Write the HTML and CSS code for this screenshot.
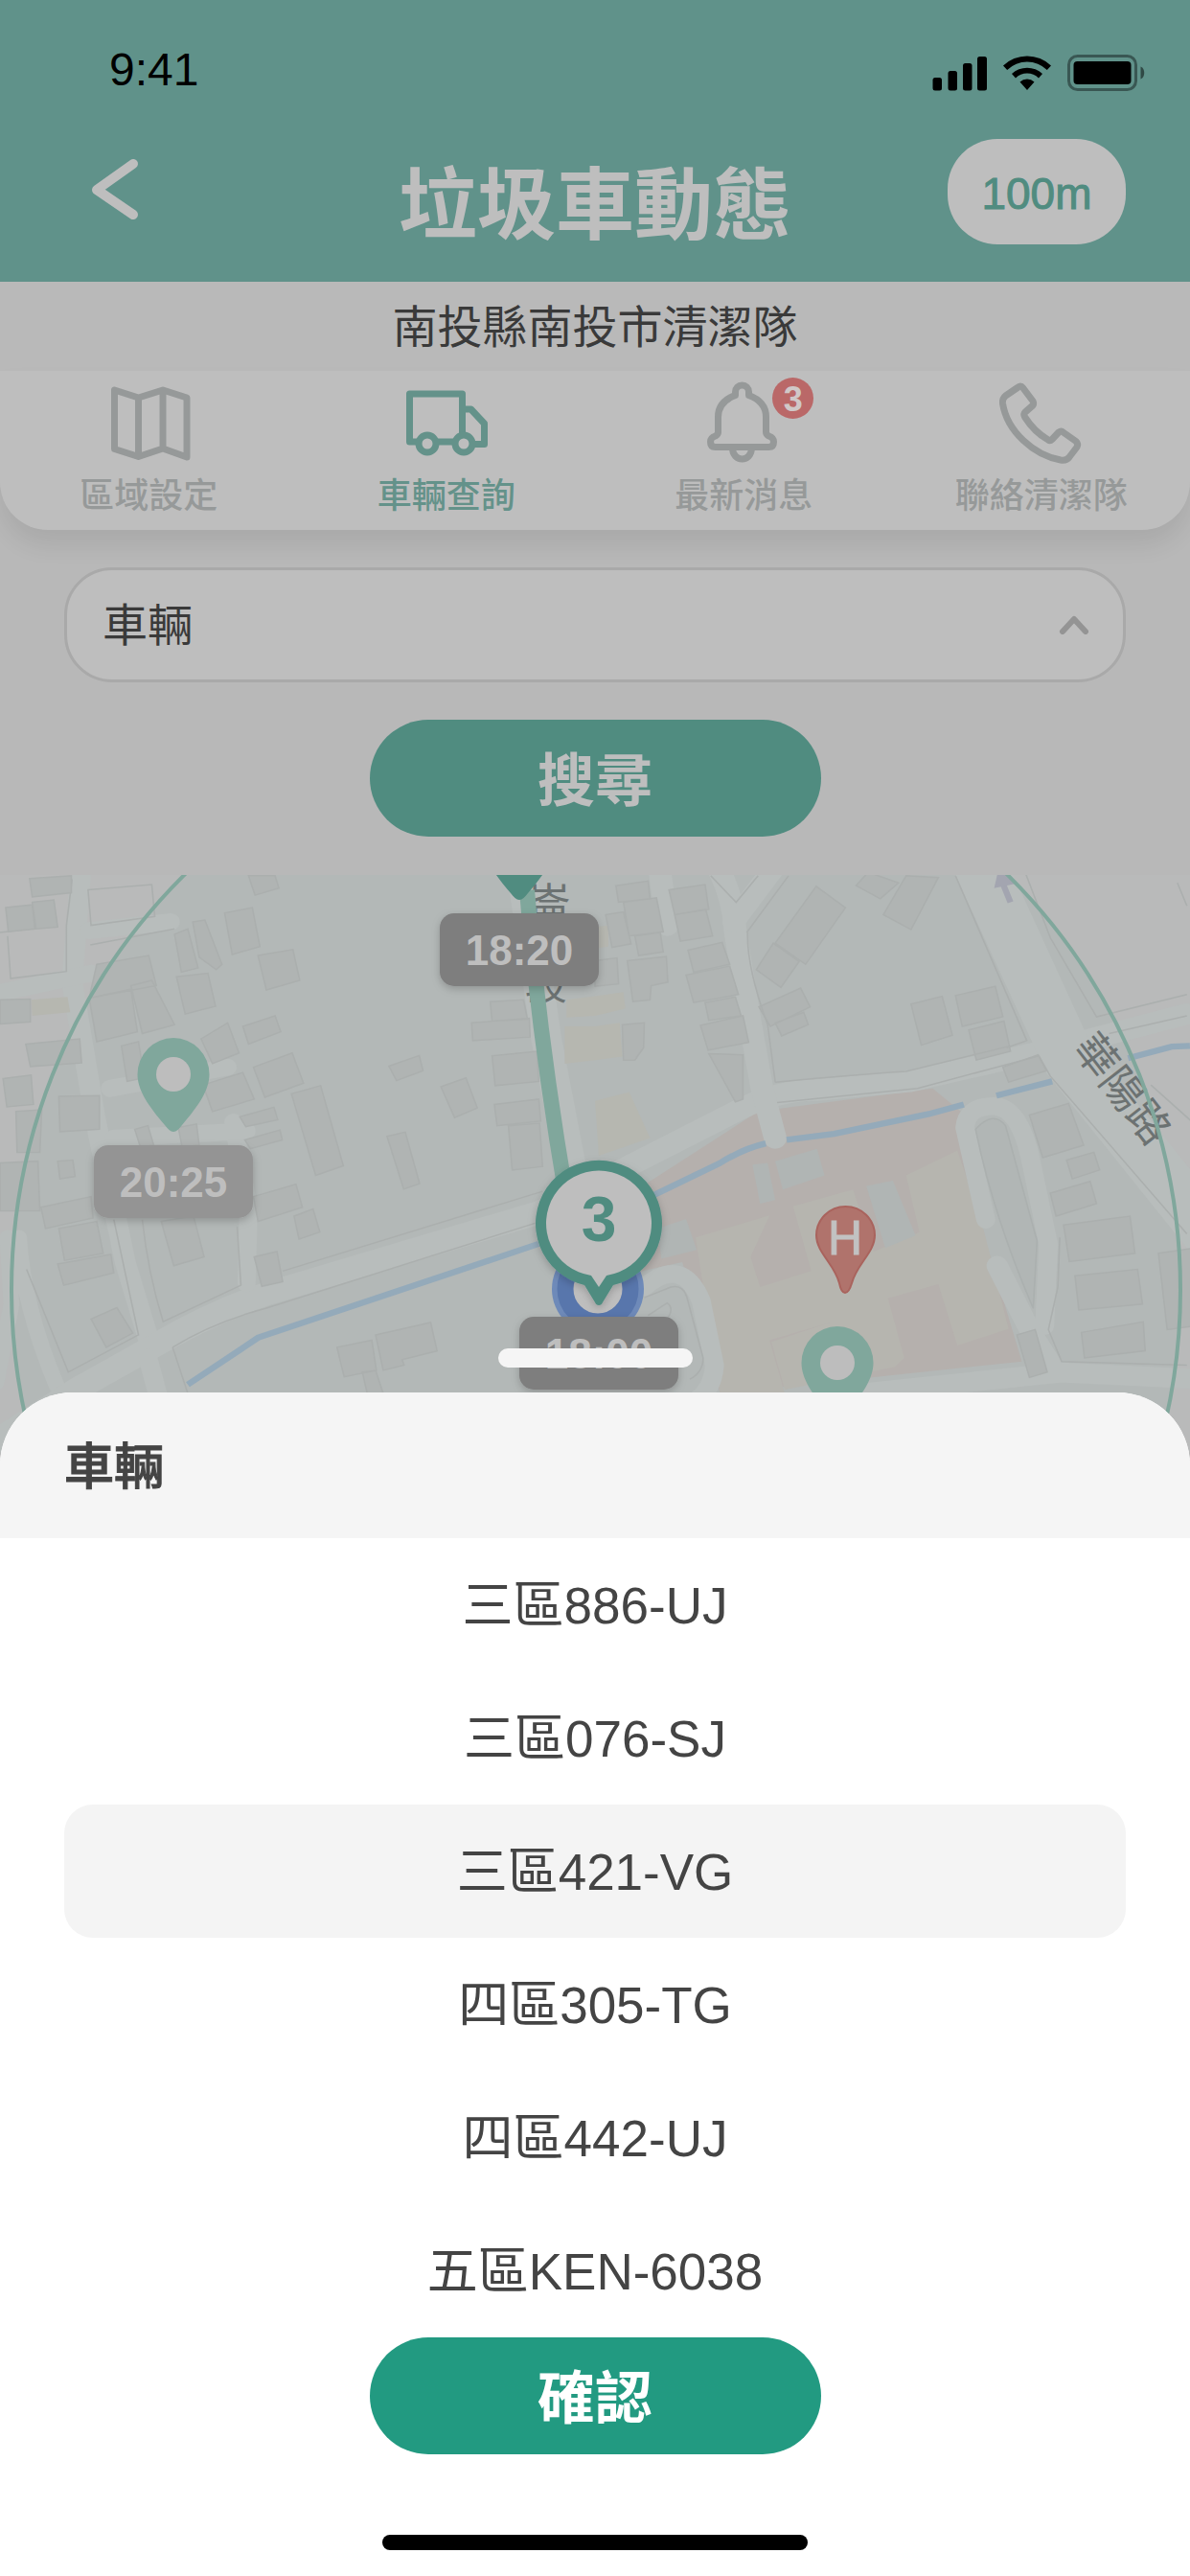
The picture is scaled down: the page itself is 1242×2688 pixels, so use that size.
FILE: index.html
```html
<!DOCTYPE html>
<html lang="zh-Hant">
<head>
<meta charset="utf-8">
<meta name="viewport" content="width=device-width, initial-scale=1">
<title>垃圾車動態</title>
<link rel="stylesheet" href="styles.css">
</head>
<body>
<div class="screen">
  <header class="header">
    <div class="status">
      <span class="status-time">9:41</span>
      <svg class="status-icons" width="222" height="40" viewBox="973 56 222 40" aria-hidden="true">
        <rect x="973.5" y="81" width="9.5" height="13.500" rx="2.500"/>
        <rect x="989.5" y="74" width="9.5" height="20.500" rx="2.500"/>
        <rect x="1005" y="66" width="9.5" height="28.500" rx="2.500"/>
        <rect x="1020" y="59" width="10" height="35.500" rx="2.500"/>
        <path d="M1072 94l-7.500-8.500a11 11 0 0 1 15 0zM1056 77l4 4.500a17 17 0 0 1 24 0l4-4.500a23.500 23.500 0 0 0-32 0zM1047 68.500l4.200 4.500a30 30 0 0 1 41.600 0l4.200-4.500a36 36 0 0 0-50 0z"/>
        <rect x="1115.500" y="58.500" width="70" height="35" rx="9" fill="none" stroke="#000" stroke-opacity=".4" stroke-width="3"/>
        <rect x="1120.500" y="64" width="60" height="24" rx="4"/>
        <path d="M1190.500 69.500c5 2 5 11 0 13z" fill-opacity=".5"/>
      </svg>
    </div>
    <div class="titlebar">
      <button class="back" type="button" aria-label="返回">
        <svg width="48" height="60" viewBox="0 0 48 60" aria-hidden="true"><path d="M44 4L6 31l38 26"/></svg>
      </button>
      <h1 class="title">垃圾車動態</h1>
      <button class="distance" type="button">100m</button>
    </div>
  </header>

  <main class="main">
    <p class="team">南投縣南投市清潔隊</p>

    <nav class="tabs">
      <a class="tab" href="#area">
        <svg class="tab-icon" viewBox="0 0 84 84" aria-hidden="true"><path d="M6.500 7L31.500 15 57 7l25 8v62L57 68l-25.500 8.500-25-8zM31.500 15v61M57 7v61"/></svg>
        <span>區域設定</span>
      </a>
      <a class="tab tab-active" href="#vehicles">
        <svg class="tab-icon" viewBox="0 0 84 84" aria-hidden="true"><path d="M12 61H3.500V11h55v43M31 61h20M60 27h7.500L81.500 42v21.500H70"/><circle cx="22" cy="63" r="9"/><circle cx="60" cy="63" r="9"/></svg>
        <span>車輛查詢</span>
      </a>
      <a class="tab" href="#news">
        <span class="tab-figure">
          <svg class="tab-icon" viewBox="0 0 84 84" aria-hidden="true"><path d="M33.500 12.500V9a7 7 0 0 1 14 0v3.500C57 16 65.500 23 65.500 35v16c0 2 1 3 3 4 3 1 5 3 5 6 0 4-2 5.500-5 5.500h-56c-3 0-5-1.500-5-5.500 0-3 2-5 5-6 2-1 3-2 3-4V35c0-12 8.500-19 18-22.500zM30.500 67c0 16 20 16 20 0"/></svg>
          <span class="badge">3</span>
        </span>
        <span>最新消息</span>
      </a>
      <a class="tab" href="#contact">
        <svg class="tab-icon" viewBox="0 0 84 84" aria-hidden="true"><path d="M17 4.500c2-2 4-2 5.500 0L33 18.500c1 2 1 3 0 4.500l-8 7c-1.500 1.500-1.500 3-.5 5 7 11 14 18 24.500 24 1.500 1 3 .5 4-.5l7-7.500c2-1.500 3-1.500 4.500 0L78 60.500c2 2 2 4 1 6L71 77c-2 3-5 3.500-9 3C34 75 6 50 1.500 21c-.5-4 .5-6 3-8z"/></svg>
        <span>聯絡清潔隊</span>
      </a>
    </nav>

    <form class="search" action="#" method="get">
      <div class="select-wrap">
        <select class="select" aria-label="車輛" name="vehicle"><option>車輛</option></select>
        <svg class="select-arrow" width="32" height="20" viewBox="0 0 32 20" aria-hidden="true"><path d="M4 17L16 4l12 13"/></svg>
      </div>
      <button class="button button-dim" type="submit">搜尋</button>
    </form>

    <section class="map" aria-label="地圖">
      <svg class="map-art" viewBox="0 914 1242 640" role="img" aria-label="南投市街道圖">
        <defs>
          <filter id="lift" x="-20%" y="-20%" width="140%" height="150%"><feDropShadow dx="0" dy="3" stdDeviation="4" flood-opacity=".2"/></filter>
          <g id="pin"><path d="M0 60C-3 60-6 57-9 53-27 32-37.500 16-37.500 0a37.500 38 0 0 1 75 0C37.500 16 27 32 9 53 6 57 3 60 0 60z"/><circle r="18" fill="#bdbdbd"/></g>
        </defs>
        <rect x="0" y="914" width="1242" height="640" fill="#b9baba"/>
        <circle cx="622" cy="1347" r="610" fill="#b3b8b7"/>

        <g transform="translate(0 900) scale(.396 .37)">
          <g class="road">
            <path d="M215 0L190 340Q225 560 250 720L330 1130 395 1360" stroke-width="55"/>
            <path d="M0 370L240 315M235 195L450 170" stroke-width="48"/>
            <path d="M-10 1470L30 1250 20 1060M50 1060Q60 1250 150 1480" stroke-width="42"/>
            <path d="M-20 1640L200 1490 400 1370Q560 1270 700 1220L1420 990 1600 900" stroke-width="66"/>
            <path d="M290 640L600 580M300 780L650 760M615 735L655 980 650 1190" stroke-width="48"/>
            <path d="M390 1400L440 1600" stroke-width="50"/>
            <path d="M1380 60L1440 500 1530 1000" stroke-width="80"/>
          </g>
          <g class="block">
            <path d="M0 200L80 190M20 210L28 330 175 310 175 180 190 50 M238 235L460 190M232 80L400 65 408 155 240 180z" fill="none"/>
            <path d="M78 48L188 40 188 88 85 100zM15 130L85 122 92 190 22 198zM85 115L142 108 152 185 95 190zM0 390L80 388 80 452 0 458zM68 515L210 500 215 568 80 578zM8 612L82 602 88 685 18 692zM42 705L110 700 105 820 45 820zM155 662L262 660 262 755 158 762zM152 845L192 842 198 888 158 895zM0 850L100 845 105 985 0 985z"/>
            <path d="M255 290L392 265 412 350 235 385zM235 385L345 360 362 480 255 508zM345 350L400 335 460 460 375 485zM460 205L495 190 522 300 478 312zM508 170L540 165 585 290 570 305 525 270zM592 145L665 130 685 240 612 262zM655 40L725 40 735 75 672 95zM680 265L772 248 790 335 702 362zM465 325L548 315 568 408 488 430zM640 465L725 435 740 480 655 515z"/>
            <path d="M668 580L770 540 800 625 698 665zM768 655L845 632 905 858 832 885zM530 500L600 455 630 540 560 570zM320 520L365 508 380 610 335 620zM535 630L640 595 670 670 560 705zM632 720L722 693 732 728 648 748zM645 785L738 757 744 785 660 810zM355 755L390 745 405 800 370 805zM470 750L518 740 525 800 480 805z"/>
            <path d="M1025 577L1105 547 1115 590 1045 618zM1162 635L1228 610 1258 695 1198 722zM1020 775L1068 763 1106 908 1064 924zM1243 455L1395 442 1397 495 1246 505zM1297 548L1415 535 1420 620 1305 632zM1303 685L1420 670 1425 732 1310 745zM1340 745L1422 738 1430 860 1350 870zM1292 395L1380 390 1390 445 1297 450z"/>
            <path d="M108 975L240 945 245 1005 120 1035zM155 1035L255 1015 272 1105 170 1125zM425 1015L510 1000 538 1115 458 1140zM668 945L780 910 797 975 680 1015zM775 1000L825 980 843 1045 788 1065zM670 1115L730 1100 745 1185 690 1198zM152 1135L292 1108 300 1160 168 1195zM240 1290L308 1258 350 1330 280 1370zM888 1370L980 1350 992 1435 907 1453zM990 1335L1135 1300 1152 1380 1060 1405 1065 1420 1010 1435zM955 1440L990 1435 1010 1500 970 1510z"/>
            <path d="M375 1010Q390 1160 430 1298L635 1195 625 1030M455 1370Q560 1300 700 1260L1410 1020M745 1155L1430 930M300 1010L365 1335 180 1440 70 1150M495 1500L455 1370" fill="none"/>
          </g>
          <path class="field" d="M82 390L178 382 185 425 85 435z"/>
          <path class="river" d="M495 1475L680 1343 1420 1078"/>
        </g>

        <g transform="translate(621 900) scale(.396 .37)">
          <path class="clinic" d="M60 960L430 705 890 640 970 710 1010 1000 1125 1410 730 1455 330 1500 230 1130 60 1170z"/>
          <path class="ward" d="M265 1060L460 998 410 1115 435 1200 570 1155 522 972 680 925 735 1100 855 1045 820 885 955 815 1020 1020 1090 1318 955 1365 905 1192 772 1232 815 1400 790 1425 500 1490 465 1355 620 1300 460 1350 500 1500 330 1500z"/>
          <path class="field" d="M0 465L65 455 72 550 0 560zM0 380L75 368 80 415 0 435zM-80 465L0 465 0 560-80 570zM-75 390L0 380 0 435-75 440zM0 675L90 650 145 780 10 830zM0 185L35 180 35 240 0 245z"/>
          <path class="plain" d="M475 845L585 810 605 885 495 925zM415 855L455 850 475 955 435 965zM715 915L785 900 845 1055 765 1090zM165 1035L240 1008 268 1095 175 1120z"/>
          <g class="road">
            <path d="M-60 940L380 700Q480 645 580 645L830 620 1200 530 1560 430" stroke-width="60"/>
            <path d="M170 20L190 180M325 20Q365 100 370 200L410 460 440 640 475 780" stroke-width="60"/>
            <path d="M365 170L470 20" stroke-width="58"/>
            <path d="M1010 0L1250 560 1640 1080" stroke-width="140"/>
            <path d="M1030 1010L975 750Q980 690 1050 690 1120 690 1150 850L1195 1080 1185 1310" stroke-width="50"/>
            <path d="M1060 1140L1150 1330 1215 1440 1600 1460M700 1500L1240 1440" stroke-width="56"/>
            <path d="M130 1200Q230 1110 280 1240L315 1420Q310 1500 250 1530" stroke-width="50"/>
          </g>
          <path class="park" d="M1003 755Q1050 700 1082 745L1165 1070 1155 1260Q1050 1000 1003 755z"/>
          <g class="block">
            <path d="M55 68L140 55 145 105 62 115zM75 115L162 102 180 198 90 210zM195 80L290 65 300 135 210 150zM210 150L292 135 310 210 225 225zM28 150L75 142 95 232 45 242zM105 210L172 200 180 255 115 265zM85 280L188 268 192 340 148 350 145 390 100 395zM0 280L58 272 62 345 0 352zM72 460L130 455 128 525 105 560 75 560z"/>
            <path d="M245 250L335 228 355 290 260 312zM240 320L355 295 378 375 260 398zM290 398L370 382 385 435 300 448zM278 462L390 435 405 510 298 532zM300 542L390 545 390 670 370 678zM583 70L660 130 555 290 475 230zM470 230L538 282 490 355 425 305zM432 410L542 357 567 410 462 465zM475 455L550 425 562 460 492 492z"/>
            <path d="M720 30L800 60 752 105 688 68zM820 40L905 45 833 192 760 150zM833 402L915 380 942 490 860 518zM950 378L1055 352 1075 438 968 465zM985 475L1078 450 1095 535 1005 560zM1075 580L1168 545 1190 590 1090 622zM1145 715L1248 682 1288 800 1180 835zM1243 842L1315 820 1330 870 1258 895zM1200 935L1305 902 1322 965 1215 1000zM1235 1025L1410 1000 1423 1105 1250 1128zM1265 1168L1430 1150 1443 1248 1275 1265zM1282 1328L1445 1298 1450 1380 1290 1400zM1112 1335L1160 1320 1192 1440 1145 1455zM1485 1105L1580 1090 1580 1310 1508 1320z"/>
            <path d="M950 40L1138 505 1085 525M475 622Q700 600 820 592L1095 520M400 200L510 40M402 200Q400 300 455 460L475 622M305 40L372 115 430 40M480 680L850 640 1170 548 1200 605 1560 1050M1130 20L1200 215 1322 438 1560 375M1355 485L1560 435M1465 630L1580 740M1535 60L1560 125M1225 1060L1220 1200 1195 1320 1230 1410 1560 1420" fill="none"/>
            <path d="M130 1230L200 1200Q235 1190 245 1240L285 1400Q285 1440 250 1460M140 1280L190 1245Q210 1260 190 1290" fill="none"/>
          </g>
          <path class="river" d="M-10 1010L160 938 330 850Q390 810 450 795M505 785L630 768 880 712 972 685M1058 660L1205 620M1405 555L1520 522 1568 520"/>
          <path d="M1095 115L1075 62" stroke="#a3a5b0" stroke-width="16"/>
          <path d="M1052 75L1060 38 1090 38 1110 62z" fill="#a3a5b0"/>
        </g>

        <g class="street">
          <text x="551" y="960">崙</text>
          <text x="548" y="1044">段</text>
          <text transform="translate(1172 1137) rotate(52)" y="16" text-anchor="middle">華陽路</text>
        </g>
        <circle cx="622" cy="1347" r="610" fill="none" stroke="#80a79c" stroke-width="4"/>
        <path d="M550 930Q562 1080 591 1250" fill="none" stroke="#80a79c" stroke-width="16"/>

        <use href="#pin" x="542" y="880" fill="#508c80"/>
        <use href="#pin" x="181" y="1122" fill="#80a79c"/>
        <use href="#pin" x="874" y="1423" fill="#80a79c"/>

        <path d="M882 1350Q878 1350 876 1340C871 1320 852 1308 852 1290a30.500 30 0 0 1 61 0c0 18-19 30-24 50q-3 10-7 10z" fill="#b0736c" stroke="#a9635d" stroke-width="2"/>
        <text class="hospital" x="882" y="1310">H</text>

        <circle cx="624" cy="1346" r="48" fill="#6e8ab9"/>
        <circle cx="624" cy="1346" r="34" fill="#bebebe" stroke="#5876ac" stroke-width="17"/>
        <g filter="url(#lift)">
          <path d="M625 1363q-3 0-4-3l-11-18a66 66 0 1 1 30 0l-11 18q-1 3-4 3z" fill="#508c80"/>
          <path d="M625 1344l-8-12a55 55 0 1 1 16 0z" fill="#bebebe"/>
        </g>
        <text class="count" x="625" y="1296">3</text>

        <g filter="url(#lift)">
          <rect x="459" y="954" width="166" height="76" rx="15" fill="#7e7e7e"/>
          <rect x="98" y="1196" width="166" height="76" rx="15" fill="#949494"/>
          <rect x="542" y="1375" width="166" height="76" rx="15" fill="#7e7e7e"/>
        </g>
        <g class="time">
          <text x="542" y="1008">18:20</text>
          <text x="181" y="1250">20:25</text>
          <text x="625" y="1429">18:00</text>
        </g>
      </svg>
    </section>
  </main>

  <section class="sheet" aria-labelledby="sheet-title">
    <div class="handle"></div>
    <h2 class="sheet-title" id="sheet-title">車輛</h2>
    <form class="picker" action="#" method="get">
      <div class="options" role="radiogroup" aria-labelledby="sheet-title">
        <label class="option"><input type="radio" name="car">三區886-UJ</label>
        <label class="option"><input type="radio" name="car">三區076-SJ</label>
        <label class="option"><input type="radio" name="car" checked>三區421-VG</label>
        <label class="option"><input type="radio" name="car">四區305-TG</label>
        <label class="option"><input type="radio" name="car">四區442-UJ</label>
        <label class="option"><input type="radio" name="car">五區KEN-6038</label>
      </div>
      <button class="button" type="submit">確認</button>
    </form>
    <div class="home-bar"></div>
  </section>
</div>
</body>
</html>
```
FILE: styles.css
```css
* {
  box-sizing: border-box;
}

body,
h1,
h2,
p {
  margin: 0;
}

body,
button,
select {
  font-family: "Liberation Sans", "Noto Sans CJK TC", sans-serif;
}

button {
  border: 0;
  cursor: pointer;
}

.screen {
  display: flex;
  flex-direction: column;
  min-height: 100vh;
  overflow: hidden;
  background: #b8b8b8;
}

/* Header */
.header {
  background: #60928a;
}

.status {
  display: flex;
  align-items: center;
  justify-content: space-between;
  height: 145px;
  padding: 0 47px 0 114px;
}

.status-icons {
  margin-top: 7px;
}

.titlebar {
  display: grid;
  grid-template-columns: 1fr auto 1fr;
  align-items: start;
  height: 149px;
  padding: 0 67px;
}

.status-time {
  font-size: 48px;
  line-height: 56px;
}

.back {
  display: flex;
  align-items: center;
  justify-self: start;
  height: 104px;
  padding: 0 28px;
  background: none;
}

.back path {
  fill: none;
  stroke: #bebebe;
  stroke-width: 10;
  stroke-linecap: round;
  stroke-linejoin: round;
}

.back svg {
  overflow: visible;
}

.title {
  color: #bebebe;
  font-size: 82px;
  font-weight: 700;
  line-height: 140px;
}

.distance {
  justify-self: end;
  width: 186px;
  height: 110px;
  padding: 4px 0 0;
  border-radius: 52px;
  background: #bebebe;
  color: #508c80;
  font-size: 46px;
  -webkit-text-stroke: 1px #508c80;
}

/* Team name and tabs */
.team {
  height: 93px;
  background: #b9b9b9;
  color: #3a3a3a;
  font-size: 47px;
  line-height: 96px;
  text-align: center;
}

.tabs {
  display: grid;
  grid-template-columns: repeat(4, 1fr);
  height: 166px;
  padding-top: 13px;
  border-radius: 0 0 50px 50px;
  background: #bebebe;
  box-shadow: 0 16px 24px rgba(0, 0, 0, 0.08);
}

.tab {
  display: flex;
  flex-direction: column;
  align-items: center;
  gap: 12px;
  color: #969999;
  font-size: 36px;
  font-weight: 500;
  line-height: 44px;
  text-decoration: none;
}

.tab-active {
  color: #64928a;
}

.tab-icon {
  display: block;
  width: 84px;
  height: 84px;
  overflow: visible;
  fill: none;
  stroke: currentColor;
  stroke-width: 7;
  stroke-linejoin: round;
}

.tab-figure {
  position: relative;
}

.badge {
  position: absolute;
  top: -6px;
  right: -31px;
  width: 43px;
  height: 43px;
  border-radius: 50%;
  background: #ba6868;
  color: #d0c8c8;
  font-size: 36px;
  font-weight: 700;
  line-height: 45px;
  text-align: center;
}

/* Search form */
.search {
  display: flex;
  flex-direction: column;
  align-items: center;
  gap: 39px;
  padding: 39px 67px 40px;
}

.select-wrap {
  position: relative;
  width: 100%;
}

.select {
  display: block;
  width: 100%;
  height: 120px;
  padding: 0 37px;
  border: 3px solid #a9a9a9;
  border-radius: 50px;
  appearance: none;
  background: #bebebe;
  color: #3a3a3a;
  font-size: 47px;
}

.select-arrow {
  position: absolute;
  top: 50px;
  right: 38px;
  pointer-events: none;
}

.select-arrow path {
  fill: none;
  stroke: #949494;
  stroke-width: 6;
  stroke-linecap: round;
  stroke-linejoin: round;
}

.button {
  width: 471px;
  height: 122px;
  padding: 0 0 6px;
  border-radius: 61px;
  background: #229a81;
  color: #fff;
  font-size: 60px;
  font-weight: 700;
}

.button-dim {
  background: #508c80;
  color: #bebebe;
}

/* Map */
.main {
  flex: 1;
}

.map-art {
  display: block;
  width: 100%;
}

.road {
  fill: none;
  stroke: #b8bdbc;
  stroke-linejoin: round;
  stroke-linecap: round;
}

.block {
  fill: #b0b4b3;
  stroke: #abafae;
  stroke-width: 4;
}

.park {
  fill: #b1b6b5;
  stroke: #abb0af;
  stroke-width: 4;
}

.clinic {
  fill: #b5b0ad;
}

.ward {
  fill: #b6b5af;
}

.field {
  fill: #b6b7b0;
}

.plain {
  fill: #b0b5b4;
}

.river {
  fill: none;
  stroke: #94aaba;
  stroke-width: 17;
}

.street {
  fill: #6c7272;
  font-size: 44px;
}

.time {
  fill: #bebebe;
  font-size: 44px;
  font-weight: 700;
  text-anchor: middle;
}

.hospital {
  fill: #c2c2c2;
  font-size: 50px;
  text-anchor: middle;
  stroke: #c2c2c2;
}

.count {
  fill: #508c80;
  font-size: 66px;
  font-weight: 700;
  text-anchor: middle;
}

/* Bottom sheet */
.sheet {
  position: fixed;
  right: 0;
  bottom: 0;
  left: 0;
  display: flex;
  flex-direction: column;
  align-items: center;
  padding-bottom: 27px;
  border-radius: 76px 76px 0 0;
  background: #fff;
}

.handle {
  position: absolute;
  top: -46px;
  width: 203px;
  height: 20px;
  border-radius: 10px;
  background: #f5f5f5;
}

.sheet-title {
  width: 100%;
  height: 152px;
  padding: 0 67px;
  border-radius: 76px 76px 0 0;
  background: #f5f5f5;
  color: #444;
  font-size: 52px;
  font-weight: 500;
  line-height: 157px;
  -webkit-text-stroke: 1px #444;
}

.picker {
  display: flex;
  flex-direction: column;
  align-items: center;
  width: 100%;
  padding: 0 67px;
}

.options {
  width: 100%;
}

.option {
  display: block;
  height: 139px;
  border-radius: 30px;
  color: #444;
  font-size: 53px;
  line-height: 142px;
  text-align: center;
  cursor: pointer;
}

.option input {
  position: absolute;
  margin: 0;
  appearance: none;
}

.option:has(input:checked) {
  background: #f4f4f4;
}

.home-bar {
  width: 444px;
  height: 16px;
  margin-top: 84px;
  border-radius: 8px;
  background: #000;
}
```
